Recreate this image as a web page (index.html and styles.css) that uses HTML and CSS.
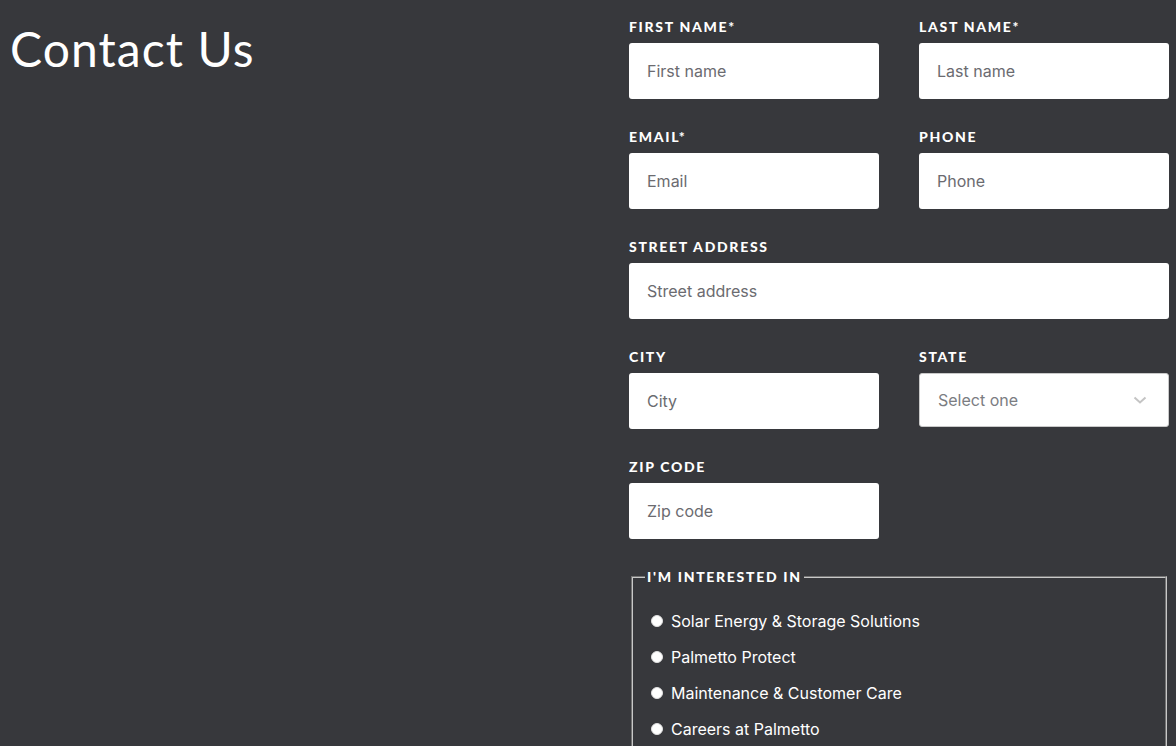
FILE: index.html
```html
<!DOCTYPE html>
<html lang="en">
<head>
<meta charset="utf-8">
<title>Contact Us</title>
<link rel="stylesheet" href="styles.css">
</head>
<body>
<div class="page">
  <div class="intro">
    <h1 class="title">Contact Us</h1>
  </div>
  <form class="form">
    <div class="grid">
      <div class="field">
        <label class="label">First Name*</label>
        <input class="input" type="text" placeholder="First name">
      </div>
      <div class="field">
        <label class="label">Last Name*</label>
        <input class="input" type="text" placeholder="Last name">
      </div>
      <div class="field">
        <label class="label">Email*</label>
        <input class="input" type="text" placeholder="Email">
      </div>
      <div class="field">
        <label class="label">Phone</label>
        <input class="input" type="text" placeholder="Phone">
      </div>
      <div class="field wide">
        <label class="label">Street Address</label>
        <input class="input" type="text" placeholder="Street address">
      </div>
      <div class="field">
        <label class="label">City</label>
        <input class="input" type="text" placeholder="City">
      </div>
      <div class="field">
        <label class="label">State</label>
        <div class="select">
          <span class="select-text">Select one</span>
          <svg class="chev" width="14" height="9" viewBox="0 0 14 9"><path d="M1.5 1.5 L7 6.5 L12.5 1.5" fill="none" stroke="#c4c4c4" stroke-width="2"/></svg>
        </div>
      </div>
      <div class="field">
        <label class="label">Zip Code</label>
        <input class="input" type="text" placeholder="Zip code">
      </div>
    </div>
    <fieldset class="interests">
      <legend class="legend">I'm Interested In</legend>
      <label class="option"><span class="radio"></span>Solar Energy &amp; Storage Solutions</label>
      <label class="option"><span class="radio"></span>Palmetto Protect</label>
      <label class="option"><span class="radio"></span>Maintenance &amp; Customer Care</label>
      <label class="option"><span class="radio"></span>Careers at Palmetto</label>
    </fieldset>
  </form>
</div>
</body>
</html>
```

FILE: styles.css
```css
html, body {
  margin: 0;
  padding: 0;
  background: #37383c;
  height: 100%;
  overflow: hidden;
}

.page {
  display: flex;
  justify-content: space-between;
  padding: 0 7px 0 10px;
  font-family: "Inter", "Liberation Sans", sans-serif;
}

.title {
  margin: 20px 0 0 0;
  font-family: "Lato", "Liberation Sans", sans-serif;
  font-weight: 400;
  font-size: 48px;
  line-height: 58px;
  color: #ffffff;
  letter-spacing: 1.1px;
}

.form {
  width: 540px;
  padding-top: 18px;
}

.grid {
  display: grid;
  grid-template-columns: 250px 250px;
  column-gap: 40px;
  row-gap: 29px;
}

.field {
  display: flex;
  flex-direction: column;
  align-items: flex-start;
}

.field.wide {
  grid-column: 1 / 3;
}

.label {
  display: block;
  font-family: "Lato", "Liberation Sans", sans-serif;
  font-weight: 900;
  font-size: 14px;
  line-height: 17px;
  letter-spacing: 1.7px;
  text-transform: uppercase;
  color: #ffffff;
  margin-bottom: 8px;
}

.input {
  box-sizing: border-box;
  width: 100%;
  height: 56px;
  border: none;
  border-radius: 3px;
  background: #ffffff;
  padding: 0 18px;
  font-family: "Inter", "Liberation Sans", sans-serif;
  font-size: 16px;
  color: #333;
  outline: none;
}

.input::placeholder {
  color: #6b6b70;
}

.select {
  box-sizing: border-box;
  width: 100%;
  height: 54px;
  margin-bottom: 2px;
  border: 1px solid #c9c9c9;
  border-radius: 3px;
  background: #ffffff;
  display: flex;
  align-items: center;
  justify-content: space-between;
  padding: 0 21px 0 18px;
}

.select-text {
  font-family: "Inter", "Liberation Sans", sans-serif;
  font-size: 16px;
  color: #7b7d82;
}

.chev {
  display: block;
  margin-top: 1px;
}

.interests {
  margin: 30px 2px 0 2px;
  padding: 4px 12px 10px 12px;
  border: 2px groove #c8c8c8;
}

.legend {
  padding: 0 2px;
  font-family: "Lato", "Liberation Sans", sans-serif;
  font-weight: 900;
  font-size: 14px;
  line-height: 16px;
  letter-spacing: 1.7px;
  text-transform: uppercase;
  color: #ffffff;
}

.option {
  display: flex;
  align-items: center;
  height: 36px;
  font-family: "Inter", "Liberation Sans", sans-serif;
  font-size: 16px;
  color: #ffffff;
}

.option:first-of-type {
  margin-top: 14px;
}

.radio {
  box-sizing: border-box;
  width: 12px;
  height: 12px;
  border-radius: 50%;
  background: #ffffff;
  border: 1px solid #e0e0e0;
  margin: 0 8px 0 6px;
  flex: none;
}
```
